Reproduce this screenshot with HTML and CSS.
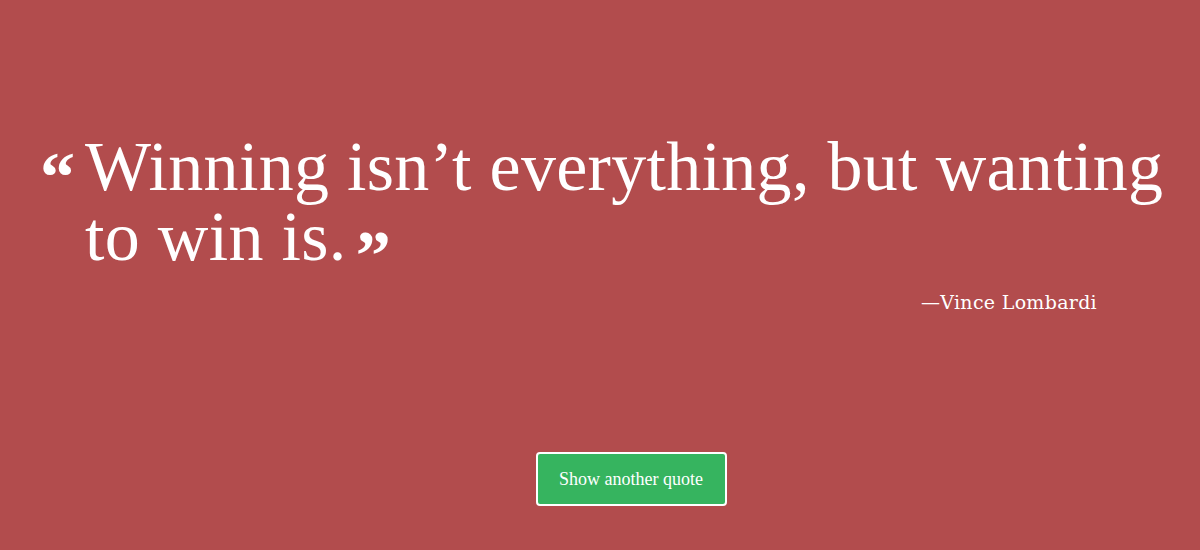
FILE: index.html
```html
<!DOCTYPE html>
<html>
<head>
<meta charset="utf-8">
<link rel="stylesheet" href="styles.css">
</head>
<body>
<main class="page">
  <blockquote class="quote">
    <span class="mark open">&ldquo;</span>
    <p class="text">Winning isn’t everything, but wanting to win is.<span class="mark close">&rdquo;</span></p>
  </blockquote>
  <p class="author">—Vince Lombardi</p>
  <div class="actions">
    <button class="btn">Show another quote</button>
  </div>
</main>
</body>
</html>
```
FILE: styles.css
```css
html, body {
  margin: 0;
  padding: 0;
  background: #b24c4d;
  height: 100%;
}
.page {
  padding: 132px 0 0 40px;
  box-sizing: border-box;
  width: 1200px;
  color: #ffffff;
  font-family: "Liberation Serif", serif;
}
.quote {
  margin: 0;
  display: flex;
  align-items: flex-start;
}
.mark {
  font-family: "Liberation Serif", serif;
  font-weight: bold;
  font-size: 70px;
  line-height: 1;
}
.open {
  width: 45px;
  flex: none;
  padding-top: 10px;
}
.close {
  margin-left: 9px;
  line-height: 0;
  vertical-align: -19px;
}
.text {
  margin: 0;
  font-size: 70px;
  line-height: 70px;
  width: 1100px;
  letter-spacing: 0.3px;
}
.author {
  margin: 19px 0 0 0;
  width: 1057px;
  text-align: right;
  font-family: "DejaVu Serif", serif;
  font-size: 19px;
  letter-spacing: 0.3px;
}
.actions {
  margin-top: 139px;
  width: 1182px;
  display: flex;
  justify-content: center;
}
.btn {
  width: 191px;
  height: 54px;
  background: #36b45f;
  border: 2px solid #ffffff;
  border-radius: 4px;
  color: #ffffff;
  font-family: "Liberation Serif", serif;
  font-size: 18px;
  cursor: pointer;
}
```
